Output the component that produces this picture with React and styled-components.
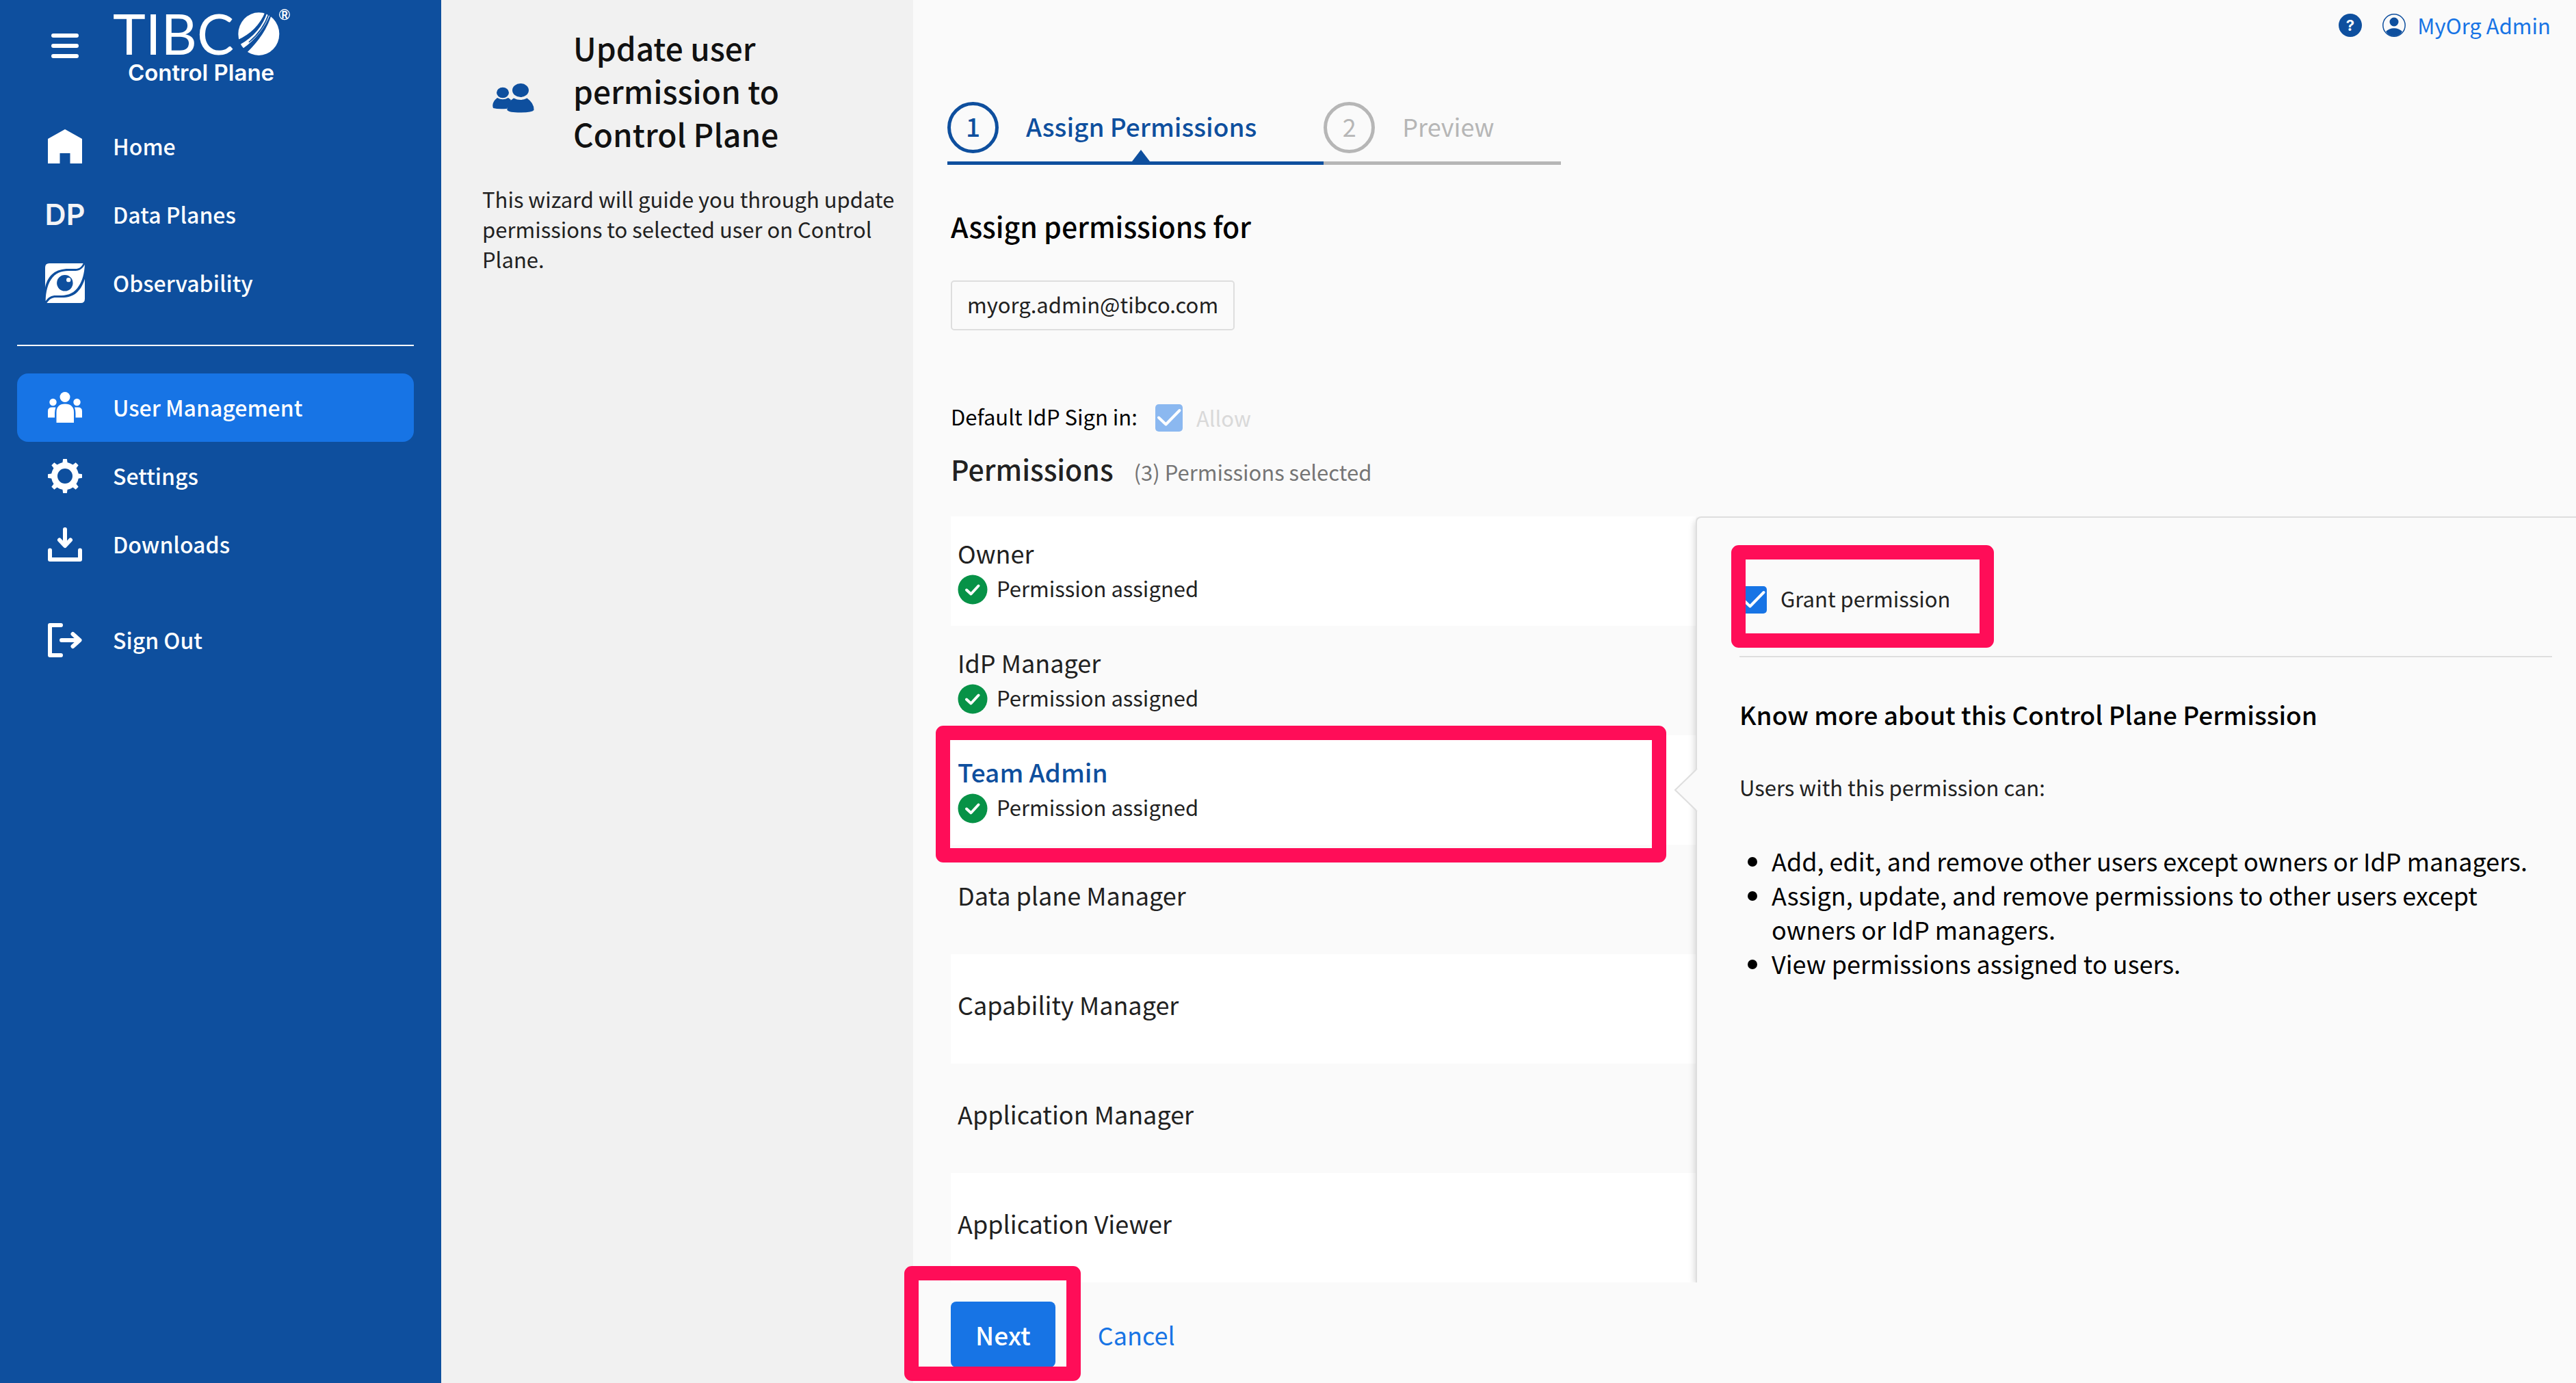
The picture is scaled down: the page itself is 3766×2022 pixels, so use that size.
import React from "react";
import styled, { createGlobalStyle } from "styled-components";

const navy = "#0e4f9e";
const azure = "#1774e5";
const canvas = "#fafafa";
const ink = "#212121";
const hairline = "#dedede";
const pink = "#ff0d58";

const GlobalStyle = createGlobalStyle`
  *, *::before, *::after { box-sizing: border-box; }
  body {
    margin: 0;
    background: ${canvas};
    color: ${ink};
    font-family: "Noto Sans CJK SC", "Noto Sans", sans-serif;
    font-size: 31px;
    line-height: 44px;
  }
  h1, h2, h3, p, ul, ol { margin: 0; padding: 0; }
  button { border: 0; padding: 0; background: none; font: inherit; color: inherit; cursor: pointer; }
  a { text-decoration: none; color: inherit; }
  svg { display: block; flex: none; }
`;

const Shell = styled.div`
  display: flex;
  min-height: 100vh;
`;

/* Sidebar */

const Sidebar = styled.aside`
  flex: 0 0 645px;
  background: ${navy};
  color: #fff;
`;

const Brand = styled.div`
  display: flex;
  align-items: center;
  gap: 50px;
  padding-left: 75px;
  margin-bottom: 30px;
`;

const MenuButton = styled.button`
  display: flex;
  flex-direction: column;
  gap: 9px;
  width: 40px;
`;

const MenuBar = styled.span`
  height: 6px;
  border-radius: 3px;
  background: #fff;
`;

const Nav = styled.nav`
  padding: 0 40px 0 25px;
  font-size: 32px;
`;

const NavItem = styled.a`
  display: flex;
  align-items: center;
  gap: 40px;
  height: 100px;
  padding: 0 40px;
  border-radius: 16px;
  font-weight: 500;
  background: ${(p) => (p.$active ? azure : "transparent")};
`;

const NavIcon = styled.span`
  display: flex;
  justify-content: center;
  width: 60px;
`;

const NavLabel = styled.span`
  padding-bottom: 3px;
`;

const NavRule = styled.hr`
  margin: 40px 0;
  border: 0;
  border-top: 2px solid #fff;
`;

const NavGap = styled.div`
  height: 40px;
`;

/* Wizard description */

const Intro = styled.section`
  flex: 0 0 690px;
  padding: 38px 20px 0 60px;
  background: #f1f1f1;
`;

const IntroHead = styled.div`
  display: flex;
  align-items: center;
  gap: 56px;
  padding-left: 15px;
  margin-bottom: 42px;
`;

const IntroTitle = styled.h1`
  max-width: 400px;
  color: #111;
  font-size: 46px;
  font-weight: 500;
  line-height: 63px;
`;

/* Main column */

const Main = styled.main`
  flex: 1;
  min-width: 0;
  padding-left: 50px;
`;

const TopBar = styled.header`
  display: flex;
  justify-content: flex-end;
  align-items: center;
  gap: 30px;
  height: 60px;
  padding: 14px 37px 0 0;
  margin-bottom: 89px;
`;

const IconButton = styled.button`
  display: flex;
`;

const Account = styled.a`
  display: flex;
  align-items: center;
  gap: 17px;
  color: ${azure};
`;

const Steps = styled.ol`
  display: flex;
  list-style: none;
`;

const Step = styled.li`
  position: relative;
  display: flex;
  align-items: center;
  gap: 40px;
  padding: 0 98px 12px 0;
  border-bottom: 5px solid;
  color: ${(p) => (p.$current ? navy : "#b6b6b6")};
  font-size: ${(p) => (p.$current ? 37 : 36)}px;
  font-weight: ${(p) => (p.$current ? 500 : 400)};
`;

const StepNumber = styled.span`
  display: flex;
  justify-content: center;
  align-items: center;
  width: 75px;
  height: 75px;
  padding-bottom: 5px;
  border: 5px solid;
  border-radius: 50%;
`;

const StepLabel = styled.span`
  padding-bottom: 5px;
`;

const StepPointer = styled.svg`
  position: absolute;
  left: 49%;
  bottom: 0;
`;

const Content = styled.div`
  padding-left: 5px;
`;

const Heading = styled.h2`
  margin-top: 59px;
  color: #000;
  font-size: 41px;
  font-weight: 500;
  line-height: 60px;
`;

const UserChip = styled.span`
  display: flex;
  align-items: center;
  width: fit-content;
  height: 73px;
  margin-top: 50px;
  padding: 0 22px 4px;
  border: 2px solid ${hairline};
  border-radius: 5px;
`;

const IdpRow = styled.div`
  display: flex;
  align-items: center;
  gap: 26px;
  margin-top: 106px;
  color: #000;
`;

const TextLabel = styled.span`
  padding-bottom: 4px;
  line-height: 40px;
`;

const CheckLabel = styled.label`
  position: relative;
  display: flex;
  align-items: center;
  gap: 20px;
  width: fit-content;
  color: ${(p) => (p.$disabled ? "#d9d9d9" : ink)};
`;

const TickHolder = styled.span`
  position: relative;
  display: flex;
`;

const TickInput = styled.input`
  appearance: none;
  width: 40px;
  height: 40px;
  margin: 0;
  border-radius: 5px;
  background: ${azure};
  &:disabled { background: #8bb8f0; }
`;

const TickMark = styled.svg`
  position: absolute;
  inset: 0;
  pointer-events: none;
`;

const PermissionsHead = styled.div`
  display: flex;
  align-items: baseline;
  gap: 30px;
  margin: 22px 0 40px;
`;

const PermissionsTitle = styled.h2`
  font-size: 41px;
  font-weight: 500;
  line-height: 60px;
`;

const Count = styled.span`
  color: #757575;
`;

const Split = styled.div`
  display: grid;
  grid-template-columns: minmax(0, 11fr) minmax(0, 13fr);
`;

const PermissionList = styled.ul`
  list-style: none;
`;

const PermissionRow = styled.li`
  position: relative;
  display: flex;
  flex-direction: column;
  align-items: flex-start;
  gap: 7px;
  height: 160px;
  padding: ${(p) => (p.$assigned ? 28 : 48)}px 10px 0;
  &:nth-child(odd) { background: #fff; }
`;

const PermissionName = styled.button`
  color: ${(p) => (p.$selected ? navy : ink)};
  font-size: ${(p) => (p.$selected ? 37 : 36)}px;
  font-weight: ${(p) => (p.$selected ? 500 : 400)};
  line-height: 50px;
`;

const Assigned = styled.span`
  display: flex;
  align-items: center;
  gap: 13px;
`;

const Highlight = styled.span`
  position: absolute;
  z-index: 2;
  inset: ${(p) => p.$inset};
  border: 21px solid ${pink};
  border-radius: 11px;
  pointer-events: none;
`;

const Detail = styled.section`
  position: relative;
  padding: 98px 35px 0 62px;
  border: solid ${hairline};
  border-width: 2px 0 0 2px;
  border-radius: 8px 0 0 0;
  background: ${canvas};
  box-shadow: -4px 4px 10px -2px rgba(0, 0, 0, 0.15);
  clip-path: inset(0 0 0 -40px);
`;

const DetailPointer = styled.svg`
  position: absolute;
  top: 366px;
  left: -34px;
`;

const DetailRule = styled.hr`
  margin: 60px 0 58px;
  border: 0;
  border-top: 2px solid ${hairline};
`;

const DetailTitle = styled.h3`
  margin-bottom: 60px;
  color: #000;
  font-size: 37px;
  font-weight: 500;
  line-height: 50px;
`;

const DetailText = styled.p`
  && { margin-bottom: 60px; }
`;

const Bullets = styled.ul`
  && { padding-left: 47px; }
  color: #000;
  font-size: 36px;
  line-height: 50px;
`;

const Footer = styled.footer`
  display: flex;
  align-items: center;
  gap: 62px;
  margin-top: 28px;
`;

const NextHolder = styled.span`
  position: relative;
  display: flex;
`;

const NextButton = styled.button`
  height: 96px;
  padding: 0 36px;
  border-radius: 8px;
  background: ${azure};
  color: #fff;
  font-size: 37px;
  font-weight: 500;
`;

const CancelButton = styled.button`
  color: ${azure};
  font-size: 36px;
`;

/* Drawings */

const Logo = () => (
  <svg width="270" height="134" viewBox="165 0 270 134" fill="#fff" role="img" aria-label="TIBCO Control Plane">
    <text x="165" y="80" fontFamily="Lato" fontSize="81">TIBC</text>
    <g transform="translate(160 0) scale(0.3333)">
      <ellipse cx="655" cy="149" rx="90" ry="94" />
      <g fill={navy}>
        <path d="M684 50Q650 136 560 176L572 196Q664 144 692 54Z" />
        <path d="M697 60Q672 132 610 184L613 187Q678 134 701 62Z" />
        <path d="M705 62Q672 150 584 214L602 232Q686 150 711 64Z" />
      </g>
      <circle cx="768" cy="64" r="22" fill="none" stroke="#fff" strokeWidth="4" />
    </g>
    <text x="416" y="27" fontFamily="Inter" fontWeight="700" fontSize="14" textAnchor="middle">R</text>
    <text x="294" y="118" fontFamily="Inter" fontWeight="600" fontSize="33" textAnchor="middle">Control Plane</text>
  </svg>
);

const HomeIcon = () => (
  <svg width="50" height="50" viewBox="0 0 50 50" fill="#fff">
    <path d="M25 0 50 14V50H32.500V35H17.500V50H0V14Z" />
  </svg>
);

const DataPlaneIcon = () => (
  <svg width="66" height="70" viewBox="0 0 66 70" fill="#f3f4f6">
    <text x="33" y="50" fontFamily="Inter" fontWeight="600" fontSize="43" textAnchor="middle">DP</text>
  </svg>
);

const EyeIcon = () => (
  <svg width="58" height="58" viewBox="48 75 173 173">
    <g fill="#fff">
      <path d="M48 180V93Q48 75 66 75H214C206 92 196 99 180 99H150C95 99 60 125 48 180Z" />
      <path d="M221 80C219 120 210 150 196 172C175 206 150 214 120 215H95C75 215 62 222 50 240C50 200 60 160 80 137C102 110 130 108 160 108H180C200 107 212 96 221 80Z" />
      <path d="M221 143V230Q221 248 203 248H55C68 230 78 224 95 224H130C180 222 206 190 221 143Z" />
    </g>
    <circle cx="134" cy="161" r="35" fill={navy} />
    <circle cx="150" cy="147" r="9.500" fill="#fff" />
  </svg>
);

const UsersIcon = () => (
  <svg width="50" height="46" viewBox="0 0 50 46" fill="#fff">
    <circle cx="25" cy="7.500" r="7.500" />
    <path d="M12.500 45V30Q12.500 17.500 25 17.500Q38 17.500 38 30V45Z" />
    <circle cx="7.500" cy="15" r="5.200" />
    <circle cx="42.500" cy="15" r="5.200" />
    <path d="M0 37.500V28Q0 22.500 6 22.500H11.500Q10 27 10 31V37.500Z" />
    <path d="M50 37.500V28Q50 22.500 44 22.500H39Q40.500 27 40.500 31V37.500Z" />
  </svg>
);

const GearIcon = () => (
  <svg width="50" height="50" viewBox="-25 -25 50 50">
    <circle r="15.500" fill="none" stroke="#fff" strokeWidth="9" />
    {[0, 45, 90, 135, 180, 225, 270, 315].map((a) => (
      <path key={a} d="M-4 -17L-2.800 -25H2.800L4 -17Z" fill="#fff" transform={`rotate(${a})`} />
    ))}
  </svg>
);

const DownloadIcon = () => (
  <svg width="50" height="50" viewBox="0 0 50 50" fill="none" stroke="#fff" strokeWidth="6" strokeLinecap="round" strokeLinejoin="round">
    <path d="M25 3V26M17 18.500 25 27 33 18.500M3 33.500V47H47V33.500" />
  </svg>
);

const SignOutIcon = () => (
  <svg width="50" height="50" viewBox="0 0 50 50" fill="none" stroke="#fff" strokeWidth="6" strokeLinecap="round" strokeLinejoin="round">
    <path d="M19 3H3V47H19M20 25H46M36.500 16 46.500 25 36.500 34" />
  </svg>
);

const PeopleIcon = () => (
  <svg width="62" height="66" viewBox="0 0 62 66" fill={navy}>
    <ellipse cx="15" cy="35.500" rx="9" ry="7.700" />
    <ellipse cx="41" cy="32" rx="12" ry="10" />
    <path d="M7 43Q15 47.500 23 43L27 46L21 59Q8 60 1 58Q-2 50 7 43Z" />
    <path d="M31 43.500Q41 48.500 50.500 43.500Q61 51 60.500 61Q58 64.500 41 64.500Q24 64.500 21.500 61Q20.500 50 31 43.500Z" />
  </svg>
);

const HelpIcon = () => (
  <svg width="34" height="34" viewBox="0 0 34 34">
    <circle cx="17" cy="17" r="17" fill={navy} />
    <text x="17" y="25" fontFamily="Inter" fontWeight="700" fontSize="22" textAnchor="middle" fill="#fff">?</text>
  </svg>
);

const UserIcon = () => (
  <svg width="34" height="34" viewBox="0 0 34 34" fill={navy}>
    <circle cx="17" cy="17" r="16.200" fill="none" stroke={navy} strokeWidth="1.500" />
    <circle cx="17" cy="12" r="6.500" />
    <path d="M5 26Q10 21.200 17 21.200Q24 21.200 29 26Q25 33 17 33Q9 33 5 26Z" />
  </svg>
);

const AssignedIcon = () => (
  <svg width="44" height="44" viewBox="0 0 44 44">
    <circle cx="22" cy="22" r="21.500" fill="#079247" />
    <path d="M13 22.500 19.500 28.500 30.500 16.500" fill="none" stroke="#fff" strokeWidth="4" strokeLinecap="round" strokeLinejoin="round" />
  </svg>
);

function Tick({ disabled, children }) {
  return (
    <CheckLabel $disabled={disabled}>
      <TickHolder>
        <TickInput type="checkbox" defaultChecked disabled={disabled} />
        <TickMark width="40" height="40" viewBox="0 0 40 40" fill="none" stroke="#fff" strokeWidth="4" strokeLinecap="round" strokeLinejoin="round">
          <path d="M5 19.500 15.500 29.500 35.500 9" />
        </TickMark>
      </TickHolder>
      {children}
    </CheckLabel>
  );
}

const NavLink = ({ icon, label, active }) => (
  <NavItem href="#" $active={active} aria-current={active ? "page" : undefined}>
    <NavIcon>{icon}</NavIcon>
    <NavLabel>{label}</NavLabel>
  </NavItem>
);

const permissions = [
  { name: "Owner", assigned: true },
  { name: "IdP Manager", assigned: true },
  { name: "Team Admin", assigned: true, selected: true },
  { name: "Data plane Manager" },
  { name: "Capability Manager" },
  { name: "Application Manager" },
  { name: "Application Viewer" },
];

export default function App() {
  return (
    <Shell>
      <GlobalStyle />
      <Sidebar>
        <Brand>
          <MenuButton aria-label="Menu">
            <MenuBar />
            <MenuBar />
            <MenuBar />
          </MenuButton>
          <Logo />
        </Brand>
        <Nav>
          <NavLink icon={<HomeIcon />} label="Home" />
          <NavLink icon={<DataPlaneIcon />} label="Data Planes" />
          <NavLink icon={<EyeIcon />} label="Observability" />
          <NavRule />
          <NavLink icon={<UsersIcon />} label="User Management" active />
          <NavLink icon={<GearIcon />} label="Settings" />
          <NavLink icon={<DownloadIcon />} label="Downloads" />
          <NavGap />
          <NavLink icon={<SignOutIcon />} label="Sign Out" />
        </Nav>
      </Sidebar>

      <Intro>
        <IntroHead>
          <PeopleIcon />
          <IntroTitle>Update user permission to Control Plane</IntroTitle>
        </IntroHead>
        <p>This wizard will guide you through update permissions to selected user on Control Plane.</p>
      </Intro>

      <Main>
        <TopBar>
          <IconButton aria-label="Help">
            <HelpIcon />
          </IconButton>
          <Account href="#">
            <UserIcon />
            MyOrg Admin
          </Account>
        </TopBar>

        <Steps>
          <Step $current aria-current="step">
            <StepNumber>1</StepNumber>
            <StepLabel>Assign Permissions</StepLabel>
            <StepPointer width="26" height="17" viewBox="0 0 26 17" fill={navy}>
              <path d="M0 17 13 0 26 17Z" />
            </StepPointer>
          </Step>
          <Step>
            <StepNumber>2</StepNumber>
            <StepLabel>Preview</StepLabel>
          </Step>
        </Steps>

        <Content>
          <Heading>Assign permissions for</Heading>
          <UserChip>myorg.admin@tibco.com</UserChip>

          <IdpRow>
            <TextLabel>Default IdP Sign in:</TextLabel>
            <Tick disabled>Allow</Tick>
          </IdpRow>

          <PermissionsHead>
            <PermissionsTitle>Permissions</PermissionsTitle>
            <Count>(3) Permissions selected</Count>
          </PermissionsHead>

          <Split>
            <PermissionList>
              {permissions.map((p) => (
                <PermissionRow key={p.name} $assigned={p.assigned}>
                  <PermissionName $selected={p.selected}>{p.name}</PermissionName>
                  {p.assigned && (
                    <Assigned>
                      <AssignedIcon />
                      <TextLabel>Permission assigned</TextLabel>
                    </Assigned>
                  )}
                  {p.selected && <Highlight $inset="-14px 43px -26px -22px" />}
                </PermissionRow>
              ))}
            </PermissionList>

            <Detail>
              <DetailPointer width="36" height="64" viewBox="0 0 36 64">
                <path d="M34 1 2 32 34 63" fill={canvas} stroke={hairline} strokeWidth="2" />
                <path d="M33 2.500H36V61.500H33Z" fill={canvas} />
              </DetailPointer>
              <Tick>
                <TextLabel>Grant permission</TextLabel>
                <Highlight $inset="-58px -64px -48px -12px" />
              </Tick>
              <DetailRule />
              <DetailTitle>Know more about this Control Plane Permission</DetailTitle>
              <DetailText>Users with this permission can:</DetailText>
              <Bullets>
                <li>Add, edit, and remove other users except owners or IdP managers.</li>
                <li>Assign, update, and remove permissions to other users except owners or IdP managers.</li>
                <li>View permissions assigned to users.</li>
              </Bullets>
            </Detail>
          </Split>

          <Footer>
            <NextHolder>
              <NextButton>Next</NextButton>
              <Highlight $inset="-52px -37px -20px -68px" />
            </NextHolder>
            <CancelButton>Cancel</CancelButton>
          </Footer>
        </Content>
      </Main>
    </Shell>
  );
}
